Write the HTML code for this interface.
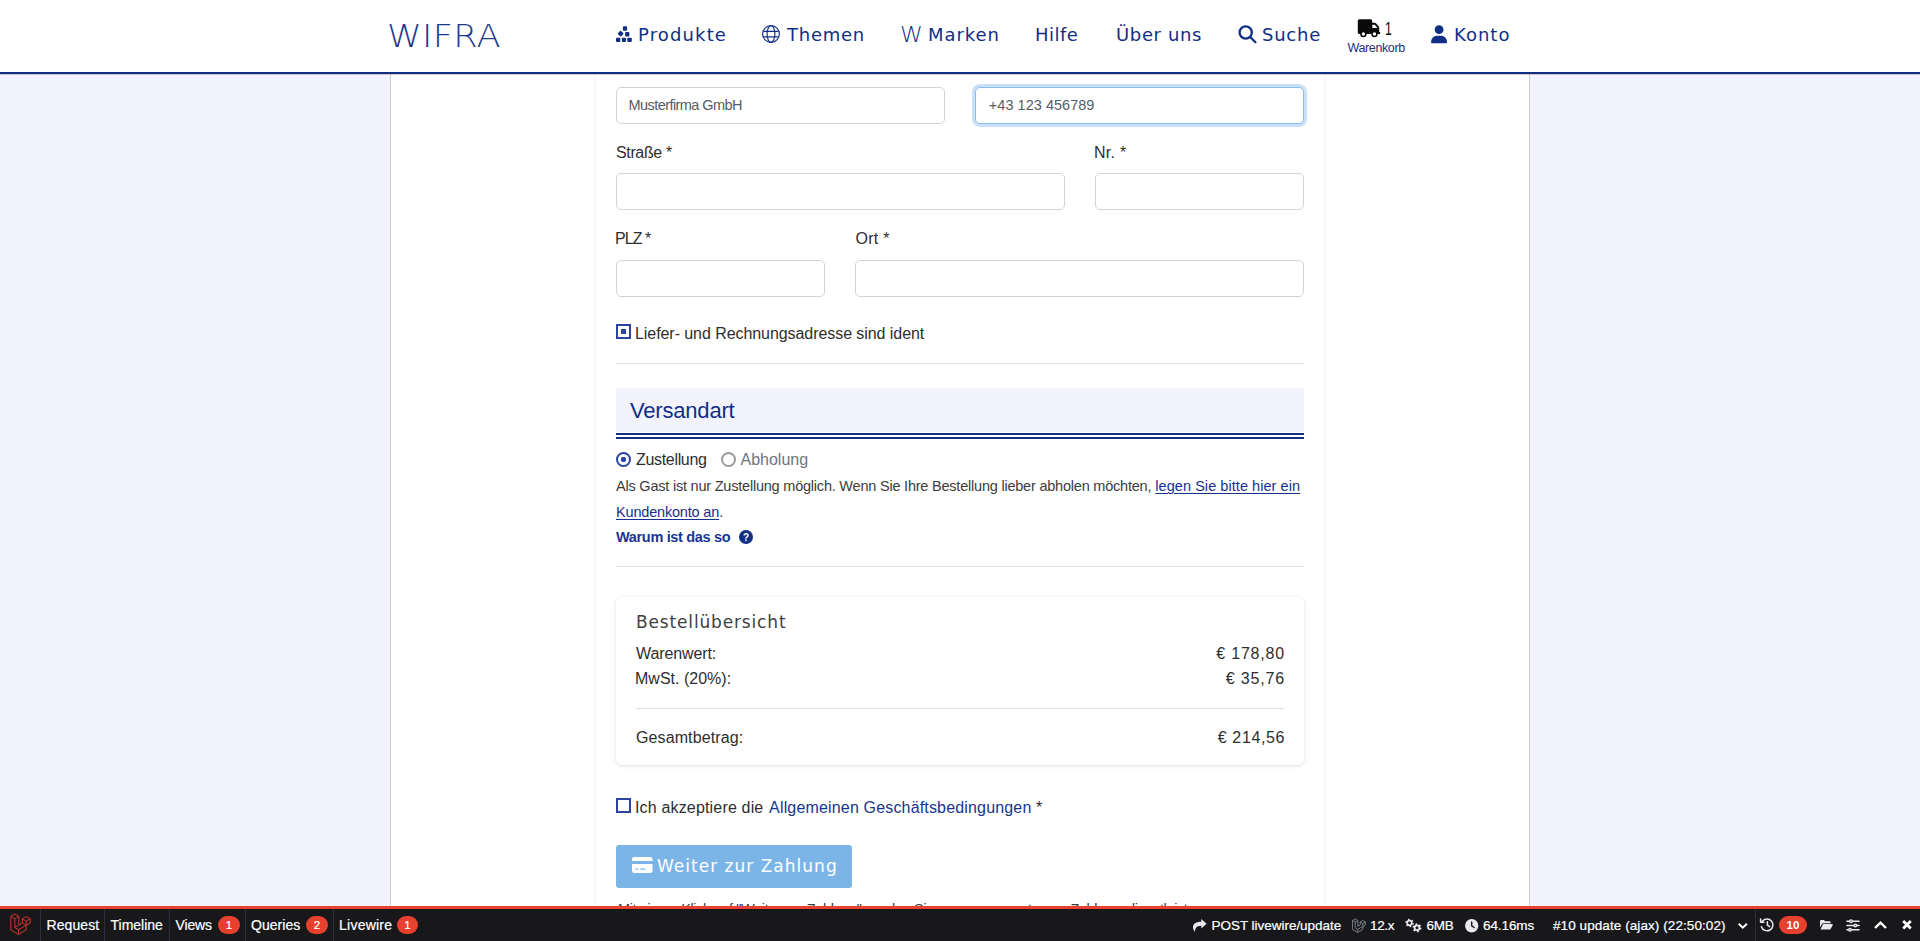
<!DOCTYPE html>
<html lang="de">
<head>
<meta charset="utf-8">
<title>WIFRA – Bestellung</title>
<style>
*{box-sizing:border-box;margin:0;padding:0}
html,body{width:1920px;height:941px;overflow:hidden}
body{background:#f3f3fe;font-family:"Liberation Sans",sans-serif;color:#262626;position:relative;font-size:16px}
a{color:inherit;text-decoration:none}
svg{display:block;position:absolute;overflow:visible}
/* header */
header{position:absolute;left:0;top:0;width:1920px;height:74px;background:#fff;border-bottom:2px solid #112e84;box-shadow:0 1px 0 rgba(30,25,0,.2);z-index:5}
.logo{position:absolute;left:387px;top:13px;transform:scaleX(1.1);transform-origin:0 0;font-family:"DejaVu Sans Light","DejaVu Sans",sans-serif;font-weight:200;font-size:32px;line-height:46px;color:#1f3a8a;white-space:nowrap}
nav a{position:absolute;top:21.5px;height:26px;line-height:26px;font-family:"DejaVu Sans","Liberation Sans",sans-serif;font-size:18px;color:#112e84;white-space:nowrap}
nav a.cart{font-family:"Liberation Sans",sans-serif;color:#111}
nav .wk{position:absolute;font-size:12.5px;line-height:16px;color:#1a2f82;white-space:nowrap}
nav .wm{position:absolute;font-family:"DejaVu Sans Light","DejaVu Sans",sans-serif;font-weight:200;font-size:20px;line-height:26px;color:#1a2f82}
/* page */
.wrap{position:absolute;left:390px;top:74px;width:1140px;height:867px;background:#fff;border-left:1px solid #cdcdcd;border-right:1px solid #cdcdcd}
.col{position:absolute;left:596px;top:74px;width:728px;height:867px;background:#fff;box-shadow:0 0 4px rgba(0,0,0,.1)}
form{position:absolute;left:616px;top:0;width:688px;height:941px}
.inp{position:absolute;display:block;margin:0;height:37px;border:1px solid #ced4da;border-radius:5px;background:#fff;font-family:"Liberation Sans",sans-serif;font-size:14.5px;color:#555c63;padding:0 12px 2px;line-height:normal;white-space:nowrap;outline:0}
.inp.focus{border-color:#8cbcec;box-shadow:0 0 0 3px rgba(60,140,220,.27)}
.l{position:absolute;font-size:16px;line-height:24px;color:#2e2e2e;white-space:nowrap}
.s{position:absolute;font-size:14.5px;line-height:24px;color:#3c3c3c;white-space:nowrap}
hr{position:absolute;border:0;border-top:1px solid #dfe0e1;height:0}
.blue{color:#18358e}
.lnk{color:#16318b;text-decoration:underline;text-decoration-thickness:1px;text-underline-offset:1.5px}
h2{position:absolute;left:0;top:388px;width:688px;height:51px;background:linear-gradient(#f3f3fe,#f3f3fe) 0 0/100% 44px no-repeat;border-bottom:6px double #112e84}
h2 span{position:absolute;left:14px;top:8px;font-size:22px;line-height:30px;font-weight:400;color:#112e84;white-space:nowrap}
.cb,.rd{position:absolute;display:block;-webkit-appearance:none;appearance:none;margin:0;width:15px;height:15px;border:2px solid #2c43a0;background:#fff;outline:0}
.cb:checked{background:linear-gradient(#2c43a0,#2c43a0) 3px 3px/5px 5px no-repeat #fff}
.rd{border-radius:50%}
.rd:checked{background:radial-gradient(circle at 50% 50%,#2c43a0 0,#2c43a0 2.2px,#fff 3px)}
.rd.off{border:2px solid #999}
.card{position:absolute;left:0;top:597px;width:688px;height:168px;background:#fff;border-radius:6px;box-shadow:0 1px 4px rgba(0,0,0,.12)}
.card h3{position:absolute;left:20px;top:12px;font-family:"DejaVu Sans","Liberation Sans",sans-serif;font-weight:400;font-size:17px;line-height:26px;color:#404040;white-space:nowrap}
.r{right:19px;text-align:right}
.btn{position:absolute;display:block;left:0;top:845px;width:236px;height:43px;background:#7bb5e7;border:0;border-radius:3px;color:#fff;padding:0;margin:0;font:inherit;text-align:left}
.btn span{position:absolute;left:41px;top:8px;font-family:"DejaVu Sans","Liberation Sans",sans-serif;font-size:17px;line-height:26px;white-space:nowrap}
/* debugbar */
.dbg{position:absolute;left:0;top:906px;width:1920px;height:35px;background:#18181b;border-top:3px solid #ea4030;z-index:9;font-family:"Liberation Sans",sans-serif;font-size:14px;color:#fff}
.dbg .t{position:absolute;top:7.8px;line-height:16px;white-space:nowrap;font-weight:400;-webkit-text-stroke:.2px #fff}
.dbg .sep{position:absolute;top:0;width:1px;height:32px;background:#283040}
.dbg .bd{position:absolute;top:7px;height:18px;border-radius:9px;background:#e8402f;color:#fff;font-size:11.5px;line-height:18px;text-align:center;-webkit-text-stroke:.2px #fff}
/*FIT*/
#logo{letter-spacing:0.25px}
#n1{letter-spacing:1.143px}
#n2{letter-spacing:0.75px}
#n3{letter-spacing:0.95px}
#n4{letter-spacing:0.5px}
#n5{letter-spacing:0.641px}
#n6{letter-spacing:0.75px}
#n7w{letter-spacing:-0.375px}
#n8{letter-spacing:1.0px}
#l1{letter-spacing:-0.357px}
#l2{letter-spacing:0.25px}
#l3{letter-spacing:-0.95px}
#l4{letter-spacing:0.25px}
#c1{letter-spacing:-0.065px}
#h2t{letter-spacing:-0.188px}
#r1{letter-spacing:-0.324px}
#r2{letter-spacing:-0.005px}
#p2{letter-spacing:-0.179px}
#p3{letter-spacing:-0.328px}
#ct{letter-spacing:0.844px}
#k1{letter-spacing:-0.101px}
#k2{letter-spacing:0.01px}
#k3{letter-spacing:0.104px}
#v1{letter-spacing:0.816px}
#v2{letter-spacing:0.833px}
#v3{letter-spacing:0.614px}
#bt{letter-spacing:1.01px}
#p4{letter-spacing:-0.37px}
#d1{letter-spacing:0.083px}
#d2{letter-spacing:-0.004px}
#d3{letter-spacing:-0.125px}
#d4{letter-spacing:0.048px}
#d5{letter-spacing:0.245px}
#d6{letter-spacing:-0.03px}
#d7{letter-spacing:-0.334px}
#d8{letter-spacing:-0.25px}
#d9{letter-spacing:-0.086px}
#d10{letter-spacing:0.078px}
#p1s{letter-spacing:-0.214px}
#p1a{letter-spacing:0.055px}
#c2s{letter-spacing:0.168px}
#c2a{letter-spacing:0.166px}
/*ENDFIT*/
</style>
</head>
<body>
<header>
  <a class="logo" id="logo" href="#">WIFRA</a>
  <nav>

    <svg style="left:616px;top:26px" width="16" height="16" viewBox="0 0 16 16" fill="#112e84"><rect x="6.9" y=".2" width="4.2" height="4.5" rx=".9"/><rect x="2.4" y="5.4" width="4.5" height="4.5" rx=".9" transform="rotate(38 4.65 7.65)"/><rect x="9.1" y="6.1" width="4.3" height="4.3" rx=".9"/><rect x="0" y="11.7" width="4.3" height="4.3" rx=".9"/><rect x="5.9" y="11.7" width="4.1" height="4.3" rx=".9"/><rect x="11.3" y="11.7" width="4.5" height="4.3" rx=".9"/></svg>
    <svg style="left:762px;top:25px" width="18" height="18" viewBox="0 0 18 18" fill="none" stroke="#112e84" stroke-width="1.15"><circle cx="9" cy="9" r="8.4"/><ellipse cx="9" cy="9" rx="3.9" ry="8.4"/><path d="M1.4 6.4h15.2M1.4 11.8h15.2"/></svg>
    <svg style="left:1238px;top:25px" width="19" height="19" viewBox="0 0 19 19" fill="none" stroke="#112e84" stroke-width="2.3" stroke-linecap="round"><circle cx="7.7" cy="7.5" r="6.1"/><path d="M12.2 12l5.2 5.2"/></svg>
    <svg style="left:1357px;top:19px" width="24" height="19" viewBox="0 0 24 19" fill="#0a0a0a"><rect x=".8" y=".2" width="14.400" height="14.700" rx="1.600"/><path d="M15 3.800h2.400c.7 0 1.300.3 1.800.8l2.200 2.400c.5.500.8 1.200.8 1.900v4.100h.2a.9.900 0 0 1 0 1.900h-7.400z"/><path fill="#fff" d="M15.400 5.700h1.900c.2 0 .4.100.6.300l2.500 2.900h-5z"/><circle cx="6.400" cy="15" r="3.200"/><circle cx="6.400" cy="15" r="1.650" fill="#fff"/><circle cx="17.500" cy="15" r="3.200"/><circle cx="17.500" cy="15" r="1.650" fill="#fff"/></svg>
    <svg style="left:1431px;top:25px" width="16" height="19" viewBox="0 0 16 19" fill="#112e84"><circle cx="8.100" cy="4.600" r="4.400"/><path d="M6 10.800h4.200a5.800 5.800 0 0 1 5.800 5.800v.7a.9.900 0 0 1-.9.900h-14.100a.9.900 0 0 1-.9-.9v-.7a5.800 5.800 0 0 1 5.900-5.800z"/></svg>
    <a href="#" id="n1" style="left:638px">Produkte</a>
    <a href="#" id="n2" style="left:787px">Themen</a>
    <span class="wm" id="n3w" style="left:899.7px;top:21.5px;font-size:20.5px;transform:scaleX(1.13);transform-origin:0 0">W</span>
    <a href="#" id="n3" style="left:928px">Marken</a>
    <a href="#" id="n4" style="left:1035px">Hilfe</a>
    <a href="#" id="n5" style="left:1116px">Über uns</a>
    <a href="#" id="n6" style="left:1262px">Suche</a>
    <a href="#" id="n7" class="cart" style="left:1385px;top:15.600px;font-size:18px;transform:scaleX(.68);transform-origin:0 0">1</a>
    <span class="wk" id="n7w" style="left:1347.5px;top:40px">Warenkorb</span>
    <a href="#" id="n8" style="left:1454px">Konto</a>
  </nav>
</header>
<div class="wrap"></div>
<div class="col"></div>
<form>
  <input class="inp" id="i1" type="text" value="Musterfirma GmbH" style="left:0;top:87px;width:329px;padding-left:11.6px;letter-spacing:-0.574px">
  <input class="inp focus" id="i2" type="tel" value="+43 123 456789" style="left:359px;top:87px;width:329px;padding-left:12.8px;letter-spacing:0.03px">

  <label class="l" id="l1" style="left:0;top:141px">Straße *</label>
  <label class="l" id="l2" style="left:478px;top:141px">Nr. *</label>
  <input class="inp" type="text" style="left:0;top:173px;width:449px">
  <input class="inp" type="text" style="left:479px;top:173px;width:209px">

  <label class="l" id="l3" style="left:-1px;top:227px">PLZ *</label>
  <label class="l" id="l4" style="left:239.5px;top:227px">Ort *</label>
  <input class="inp" type="text" style="left:0;top:260px;width:209px">
  <input class="inp" type="text" style="left:239px;top:260px;width:449px">

  <input type="checkbox" class="cb" checked style="left:0;top:324px">
  <label class="l" id="c1" style="left:19px;top:322px">Liefer- und Rechnungsadresse sind ident</label>
  <hr style="left:0;top:363px;width:688px">

  <h2><span id="h2t">Versandart</span></h2>

  <input type="radio" name="versand" class="rd" checked style="left:0;top:452px">
  <label class="l" id="r1" style="left:20px;top:447.5px">Zustellung</label>
  <input type="radio" name="versand" class="rd off" disabled style="left:105px;top:452px">
  <label class="l" id="r2" style="left:124.5px;top:447.5px;color:#6c757d">Abholung</label>

  <p class="s" id="p1" style="left:0;top:474px"><span id="p1s">Als Gast ist nur Zustellung möglich. Wenn Sie Ihre Bestellung lieber abholen möchten,</span> <a href="#" class="lnk" id="p1a">legen Sie bitte hier ein</a></p>
  <p class="s" id="p2" style="left:0;top:499.5px"><a href="#" class="lnk">Kundenkonto an</a>.</p>
  <p class="s blue" id="p3" style="left:0;top:525px;font-weight:700">Warum ist das so</p>
  <svg style="left:122.800px;top:529.800px" width="14" height="14" viewBox="0 0 14 14"><circle cx="7" cy="7" r="7" fill="#122f85"/><text x="7" y="10.600" text-anchor="middle" font-family="Liberation Sans, sans-serif" font-weight="700" font-size="10" fill="#fff">?</text></svg>
  <hr style="left:0;top:566px;width:688px">

  <div class="card">
    <h3 id="ct">Bestellübersicht</h3>
    <span class="l" id="k1" style="left:20px;top:45px">Warenwert:</span>
    <span class="l r" id="v1" style="top:45px">€ 178,80</span>
    <span class="l" id="k2" style="left:19px;top:70px">MwSt. (20%):</span>
    <span class="l r" id="v2" style="top:70px">€ 35,76</span>
    <hr style="left:20px;top:111px;width:648px">
    <span class="l" id="k3" style="left:20px;top:129px">Gesamtbetrag:</span>
    <span class="l r" id="v3" style="top:129px">€ 214,56</span>
  </div>

  <input type="checkbox" class="cb" style="left:0;top:798px">
  <label class="l" id="c2" style="left:19px;top:796px"><span id="c2s">Ich akzeptiere die</span> <a href="#" class="blue" id="c2a" style="margin-left:1.2px">Allgemeinen Geschäftsbedingungen</a> *</label>

  <button class="btn" type="submit"><svg style="left:15.700px;top:12.100px" width="21" height="16" viewBox="0 0 21 16" fill="#fff"><path d="M2.300 0h15.900a2.300 2.300 0 0 1 2.300 2.300v1.600h-20.500v-1.600a2.300 2.300 0 0 1 2.300-2.300z"/><path fill-rule="evenodd" d="M0 6.900h20.500v6.800a2.300 2.300 0 0 1-2.300 2.300h-15.900a2.300 2.300 0 0 1-2.300-2.300zm3.800 4.600a.6.600 0 0 0 0 1.200h2a.6.600 0 0 0 0-1.200zm5 0a.6.600 0 0 0 0 1.200h4a.6.600 0 0 0 0-1.200z"/></svg><span id="bt">Weiter zur Zahlung</span></button>
  <p class="s" id="p4" style="left:2px;top:896.6px">Mit einem Klick auf "Weiter zur Zahlung" werden Sie zu unserem externen Zahlungsdienstleister</p>
</form>

<div class="dbg">

  <svg style="left:10.2px;top:4.4px" width="21" height="21" viewBox="0 0 22 22" fill="none" stroke="#e5352b" stroke-width=".95" stroke-linejoin="round"><path d="M5 1l4.200 2.500v9.200l3.700-2.100v-4.600l4-2.400l4.200 2.400v4.600l-4.200 2.500v4.700l-8 4.600l-8-4.600v-14.300zM1 3.500l4.100 2.400l4.100-2.400M5.100 5.900v9.400l3.800 2.200l8-4.600M8.900 17.500v4.200M5.100 15.300l3.900-2.500M12.900 6l4.100 2.400l4.100-2.400M17 8.400v4.600M12.900 10.600l4 2.300"/></svg>
  <svg style="left:1193px;top:9.800px" width="14" height="13" viewBox="0 0 14 13" fill="#e8eaee"><path d="M8.300 0l5.300 4.700l-5.300 4.700v-2.700c-3.300 0-5 .9-6 3.500c-.3.800-.3 1.700-.2 2.500c-1.500-1.300-2.100-3-2.100-4.500c0-3.500 3-5.400 8.300-5.500z"/></svg>
  <svg style="left:1352px;top:9px" width="14" height="14.500" viewBox="0 0 22 22" fill="none" stroke="#8b8f98" stroke-width="1.300" stroke-linejoin="round"><path d="M5 1l4.200 2.500v9.200l3.700-2.100v-4.600l4-2.400l4.200 2.400v4.600l-4.200 2.500v4.700l-8 4.600l-8-4.600v-14.300zM1 3.500l4.100 2.400l4.100-2.400M5.100 5.900v9.400l3.800 2.200l8-4.600M8.900 17.500v4.200M12.900 6l4.100 2.400l4.100-2.400M17 8.400v4.600"/></svg>
  <svg style="left:1404.500px;top:9.600px" width="17" height="13.500" viewBox="0 0 17 13.500" fill="none" stroke="#e8eaee"><circle cx="4.500" cy="4" r="2.300" stroke-width="1.700"/><circle cx="4.500" cy="4" r="3.500" stroke-width="1.500" stroke-dasharray="1.600 2.060"/><circle cx="12" cy="8.800" r="2.400" stroke-width="1.800"/><circle cx="12" cy="8.800" r="3.700" stroke-width="1.600" stroke-dasharray="1.700 2.170"/></svg>
  <svg style="left:1465px;top:9.500px" width="13.400" height="13.400" viewBox="0 0 14 14"><circle cx="7" cy="7" r="7" fill="#e8eaee"/><path d="M7 3.200v4l2.600 1.700" fill="none" stroke="#18181b" stroke-width="1.500" stroke-linecap="round"/></svg>
  <svg style="left:1738.400px;top:13.900px" width="10" height="6" viewBox="0 0 10 6" fill="none" stroke="#fff" stroke-width="1.900"><path d="M.7.700l4.100 3.900l4.100-3.900"/></svg>
  <svg style="left:1760px;top:9.400px" width="14" height="13.500" viewBox="0 0 14 13.500" fill="none" stroke="#e8eaee" stroke-width="1.500" stroke-linecap="round"><path d="M2.300 3.300a5.900 5.900 0 1 1-.9 5.400"/><path d="M.6.900v3.300h3.300" stroke-linejoin="round"/><path d="M7.400 3.800v3.300l2.200 1.500"/></svg>
  <svg style="left:1819.500px;top:11.400px" width="13" height="9.600" viewBox="0 0 13 9.600" fill="#e8eaee"><path d="M1.200 0h2.700l1.200 1.200h4.400a1.200 1.200 0 0 1 1.200 1.200v.8h-7.300a1.700 1.700 0 0 0-1.500.9l-1.900 3.500v-6.400a1.200 1.200 0 0 1 1.200-1.200z"/><path d="M3.500 4.100h8.600a.7.700 0 0 1 .6 1.100l-2.100 3.800a1.200 1.200 0 0 1-1 .6h-9l2.100-4.800a1 1 0 0 1 .8-.7z"/></svg>
  <svg style="left:1846px;top:9.800px" width="14" height="13" viewBox="0 0 14 13" fill="none" stroke="#e8eaee" stroke-width="1.400" stroke-linecap="round"><path d="M.9 2.200h12.200M.9 6.500h12.200M.9 10.800h12.200"/><circle cx="5" cy="2.200" r="1.300" fill="#18181b"/><circle cx="9.300" cy="6.500" r="1.300" fill="#18181b"/><circle cx="4" cy="10.800" r="1.300" fill="#18181b"/></svg>
  <svg style="left:1873.500px;top:11.900px" width="13" height="8" viewBox="0 0 13 8" fill="none" stroke="#fff" stroke-width="2.400"><path d="M1 7l5.500-5.300l5.500 5.300"/></svg>
  <svg style="left:1902px;top:11.400px" width="10" height="9.600" viewBox="0 0 10 9.600" fill="none" stroke="#fff" stroke-width="2.800"><path d="M1.200 1l7.600 7.600M8.800 1l-7.600 7.600"/></svg>
  <span class="sep" style="left:40px"></span>
  <span class="t" id="d1" style="left:46.5px">Request</span>
  <span class="sep" style="left:104px"></span>
  <span class="t" id="d2" style="left:110.5px">Timeline</span>
  <span class="sep" style="left:169px"></span>
  <span class="t" id="d3" style="left:175.5px">Views</span>
  <span class="bd" style="left:218px;width:22px">1</span>
  <span class="sep" style="left:245px"></span>
  <span class="t" id="d4" style="left:251px">Queries</span>
  <span class="bd" style="left:306px;width:22px">2</span>
  <span class="sep" style="left:333px"></span>
  <span class="t" id="d5" style="left:339px">Livewire</span>
  <span class="bd" style="left:397px;width:21px">1</span>

  <span class="t" id="d6" style="font-size:13.5px;top:9px;left:1211.5px">POST livewire/update</span>
  <span class="t" id="d7" style="font-size:13.5px;top:9px;left:1370px">12.x</span>
  <span class="t" id="d8" style="font-size:13.5px;top:9px;left:1426.5px">6MB</span>
  <span class="t" id="d9" style="font-size:13.5px;top:9px;left:1483px">64.16ms</span>
  <span class="t" id="d10" style="font-size:13.5px;top:9px;left:1553px">#10 update (ajax) (22:50:02)</span>
  <span class="sep" style="left:1755px"></span>
  <span class="bd" style="left:1779px;width:28px;font-weight:700;-webkit-text-stroke:0">10</span>
</div>
</body>
</html>
